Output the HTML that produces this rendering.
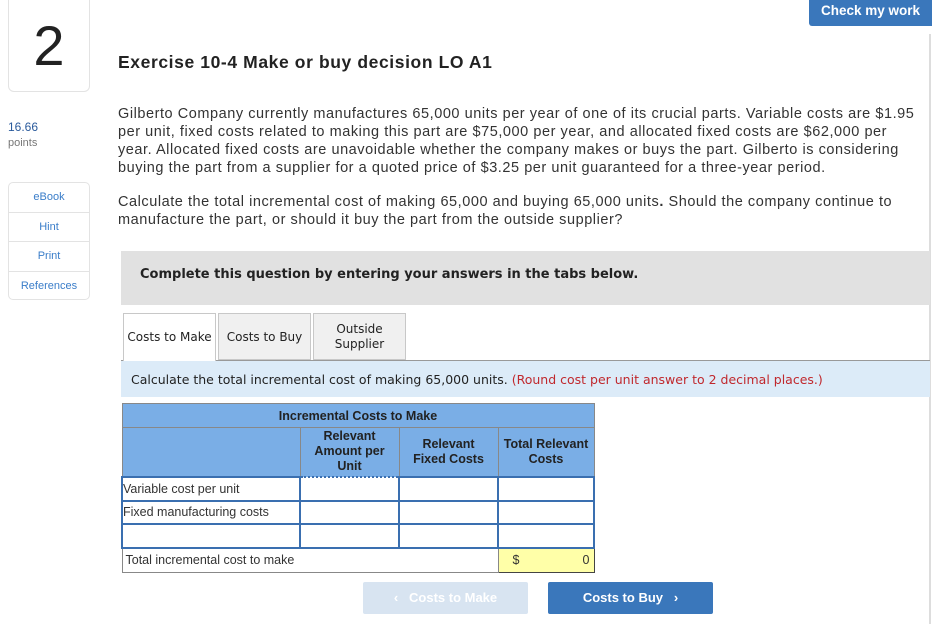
<!DOCTYPE html>
<html><head><meta charset="utf-8"><style>
*{margin:0;padding:0;box-sizing:border-box}
body{width:932px;height:624px;background:#fff;font-family:"Liberation Sans",sans-serif;position:relative;overflow:hidden;color:#333}
.a{position:absolute}
.num{left:8px;top:0;width:82px;height:92px;border:1px solid #e3e3e3;border-top:none;border-radius:0 0 6px 6px;font-size:56px;text-align:center;line-height:92px;color:#222;font-weight:300}
.side{left:8px;top:182px;width:82px;height:118px;border:1px solid #e3e3e3;border-radius:5px}
.side div{height:29.5px;border-bottom:1px solid #e3e3e3;text-align:center;font-size:11px;color:#3a7dc9;line-height:29px}
.side div:last-child{border-bottom:none}
p.t{font-size:14.5px;line-height:18px;color:#333;letter-spacing:0.55px}
.tab{top:313px;height:47px;border:1px solid #c8c8c8;background:#f0f0f0;font-family:"DejaVu Sans",sans-serif;font-size:12px;text-align:center;color:#222}
table{border-collapse:collapse;font-family:"Liberation Sans",sans-serif;font-size:12.5px;table-layout:fixed}
td{border:1px solid #888;padding:0}
</style></head><body>
<div class="a" style="left:809px;top:0;width:123px;height:26px;background:#3a77bb;border-radius:0 0 0 3px;color:#fff;font-weight:bold;font-size:13.5px;text-align:center;line-height:22px">Check my work</div>
<div class="a" style="left:929px;top:34px;width:2px;height:590px;background:#ddd"></div>
<div class="a num">2</div>
<div class="a" style="left:8px;top:120px;font-size:12px;color:#2a5a9c">16.66</div>
<div class="a" style="left:8px;top:137px;font-size:11px;color:#777">points</div>
<div class="a side"><div>eBook</div><div>Hint</div><div>Print</div><div>References</div></div>
<div class="a" style="left:118px;top:52px;font-size:17.5px;font-weight:bold;color:#222;letter-spacing:0.6px">Exercise 10-4 Make or buy decision LO A1</div>
<p class="a t" style="left:118px;top:105px;width:802px">Gilberto Company currently manufactures 65,000 units per year of one of its crucial parts. Variable costs are $1.95 per unit, fixed costs related to making this part are $75,000 per year, and allocated fixed costs are $62,000 per year. Allocated fixed costs are unavoidable whether the company makes or buys the part. Gilberto is considering buying the part from a supplier for a quoted price of $3.25 per unit guaranteed for a three-year period.</p>
<p class="a t" style="left:118px;top:193px;width:802px">Calculate the total incremental cost of making 65,000 and buying 65,000 units<b>.</b> Should the company continue to manufacture the part, or should it buy the part from the outside supplier?</p>
<div class="a" style="left:121px;top:251px;width:809px;height:54px;background:#e1e1e1;font-family:'DejaVu Sans',sans-serif;font-weight:bold;font-size:13px;padding:16px 0 0 19px;color:#222">Complete this question by entering your answers in the tabs below.</div>
<div class="a" style="left:121px;top:360px;width:809px;height:1px;background:#999"></div>
<div class="a tab" style="left:123px;width:93px;background:#fff;border-bottom:none;height:48px;line-height:46px">Costs to Make</div>
<div class="a tab" style="left:218px;width:93px;line-height:46px">Costs to Buy</div>
<div class="a tab" style="left:313px;width:93px;padding-top:8px;line-height:15px">Outside<br>Supplier</div>
<div class="a" style="left:121px;top:361px;width:809px;height:36px;background:#dcebf8;font-family:'DejaVu Sans',sans-serif;font-size:12.5px;padding:11px 0 0 10px;color:#222">Calculate the total incremental cost of making 65,000 units. <span style="color:#c0282d">(Round cost per unit answer to 2 decimal places.)</span></div>
<table class="a" style="left:121px;top:403px;width:474px">
<colgroup><col style="width:178px"><col style="width:99px"><col style="width:99px"><col></colgroup>
<tr style="height:24px;background:#7aaee6"><td colspan="4" style="text-align:center;font-weight:bold;color:#222">Incremental Costs to Make</td></tr>
<tr style="height:49px;background:#7aaee6;font-weight:bold;text-align:center;line-height:15px;color:#222"><td></td><td style="padding:0 10px">Relevant Amount per Unit</td><td style="padding:0 8px">Relevant Fixed Costs</td><td>Total Relevant Costs</td></tr>
<tr style="height:24px"><td style="border:2px solid #3a6fb0">Variable cost per unit</td><td style="border:2px dotted #3a6fb0"></td><td style="border:2px solid #3a6fb0"></td><td style="border:2px solid #3a6fb0"></td></tr>
<tr style="height:23px"><td style="border:2px solid #3a6fb0">Fixed manufacturing costs</td><td style="border:2px solid #3a6fb0"></td><td style="border:2px solid #3a6fb0"></td><td style="border:2px solid #3a6fb0"></td></tr>
<tr style="height:24px"><td style="border:2px solid #3a6fb0"></td><td style="border:2px solid #3a6fb0"></td><td style="border:2px solid #3a6fb0"></td><td style="border:2px solid #3a6fb0"></td></tr>
<tr style="height:25px"><td colspan="3" style="padding-left:3px">Total incremental cost to make</td><td style="background:#ffffa8;border:1px solid #444;padding:0 4px 0 14px"><span>$</span><span style="float:right">0</span></td></tr>
</table>
<div class="a" style="left:363px;top:582px;width:165px;height:32px;background:#d8e4f1;border-radius:2px;color:#fff;font-weight:bold;font-size:13px;text-align:center;line-height:32px">‹&nbsp;&nbsp; Costs to Make</div>
<div class="a" style="left:548px;top:582px;width:165px;height:32px;background:#3a77bb;border-radius:2px;color:#fff;font-weight:bold;font-size:13px;text-align:center;line-height:32px">Costs to Buy &nbsp; ›</div>
</body></html>
